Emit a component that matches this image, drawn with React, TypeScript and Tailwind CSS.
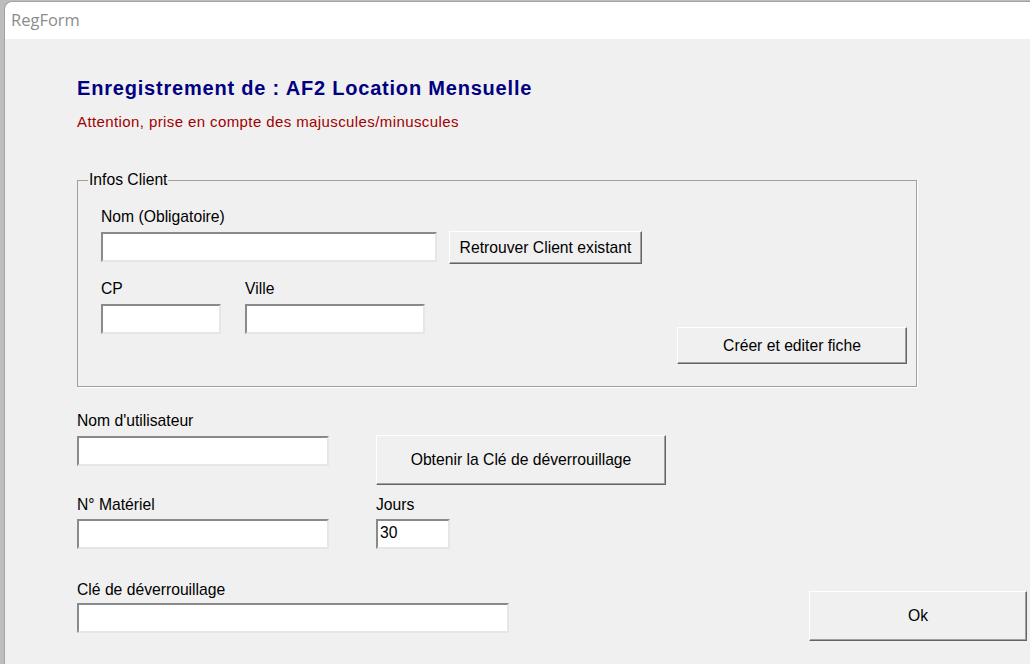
import React from "react";

const font = { fontFamily: '"Liberation Sans", Arial, sans-serif' };

function Label({ children, className = "" }: { children: React.ReactNode; className?: string }) {
    return <div className={"h-[18px] text-[15.7px] leading-[18px] text-black " + className}>{children}</div>;
}

function Field({ className = "", value = "" }: { className?: string; value?: string }) {
    return (
        <div
            className={
                "h-[30px] border-2 border-t-[#8a8a8a] border-l-[#8a8a8a] border-r-[#e6e6e6] border-b-[#e6e6e6] bg-white pl-[2px] text-[15.7px] leading-[24px] text-black " +
                className
            }
        >
            {value}
        </div>
    );
}

function Btn({ children, className = "" }: { children: React.ReactNode; className?: string }) {
    return (
        <button
            className={
                "flex items-center justify-center border border-t-white border-l-white border-r-[#646464] border-b-[#646464] bg-[#f0f0f0] text-[15.7px] text-black shadow-[inset_-1px_-1px_0_#a0a0a0] " +
                className
            }
        >
            {children}
        </button>
    );
}

export default function App() {
    return (
        <div className="flex h-[664px] w-[1030px] flex-col overflow-hidden bg-[#bdbdbd] pt-[1px] pl-[4px]" style={font}>
            <div className="flex flex-1 flex-col overflow-hidden rounded-tl-[8px] border-t border-l border-[#a3a3a3] bg-white">
                <div className="flex h-[37px] items-center pl-[6px] text-[16.5px] text-[#8c8c8c]" style={{ fontFamily: '"Open Sans", "Noto Sans", sans-serif' }}>
                    RegForm
                </div>
                <div className="flex-1 bg-[#f0f0f0] pl-[72px] pt-[38px]">
                    <div className="h-[22px] text-[20px] font-bold leading-[22px] tracking-[0.8px] text-[#000080]">
                        Enregistrement de : AF2 Location Mensuelle
                    </div>
                    <div className="mt-[14px] h-[18px] text-[15px] leading-[18px] tracking-[0.4px] text-[#a00000]">
                        Attention, prise en compte des majuscules/minuscules
                    </div>

                    <fieldset className="mt-[40px] h-[216px] w-[840px] border border-[#a0a0a0] pl-[23px] pr-[9px] shadow-[1px_1px_0_white]">
                        <legend className="-ml-[13px] h-[18px] px-[1px] text-[15.7px] leading-[18px]">Infos Client</legend>
                        <Label className="mt-[19px]">Nom (Obligatoire)</Label>
                        <div className="mt-[5px] flex items-start">
                            <Field className="mt-[1px] w-[336px]" />
                            <Btn className="ml-[12px] h-[33px] w-[193px]">Retrouver Client existant</Btn>
                        </div>
                        <div className="mt-[16px] flex items-start">
                            <div className="flex flex-col">
                                <Label>CP</Label>
                                <Field className="mt-[6px] w-[120px]" />
                            </div>
                            <div className="ml-[24px] flex flex-col">
                                <Label>Ville</Label>
                                <Field className="mt-[6px] w-[180px]" />
                            </div>
                            <Btn className="mt-[47px] ml-auto h-[37px] w-[230px]">Créer et editer fiche</Btn>
                        </div>
                    </fieldset>

                    <div className="mt-[25px] flex items-start">
                        <div className="flex w-[252px] flex-col">
                            <Label>Nom d'utilisateur</Label>
                            <Field className="mt-[6px]" />
                        </div>
                        <Btn className="mt-[23px] ml-[47px] h-[50px] w-[290px]">Obtenir la Clé de déverrouillage</Btn>
                    </div>

                    <div className="mt-[11px] flex items-start">
                        <div className="flex w-[252px] flex-col">
                            <Label>N° Matériel</Label>
                            <Field className="mt-[5px]" />
                        </div>
                        <div className="ml-[47px] flex flex-col">
                            <Label>Jours</Label>
                            <Field className="mt-[5px] w-[74px]" value="30" />
                        </div>
                    </div>

                    <div className="mt-[32px] flex items-start">
                        <div className="flex w-[432px] flex-col">
                            <Label>Clé de déverrouillage</Label>
                            <Field className="mt-[4px]" />
                        </div>
                        <Btn className="mt-[10px] ml-[300px] h-[50px] w-[218px]">Ok</Btn>
                    </div>
                </div>
            </div>
        </div>
    );
}
